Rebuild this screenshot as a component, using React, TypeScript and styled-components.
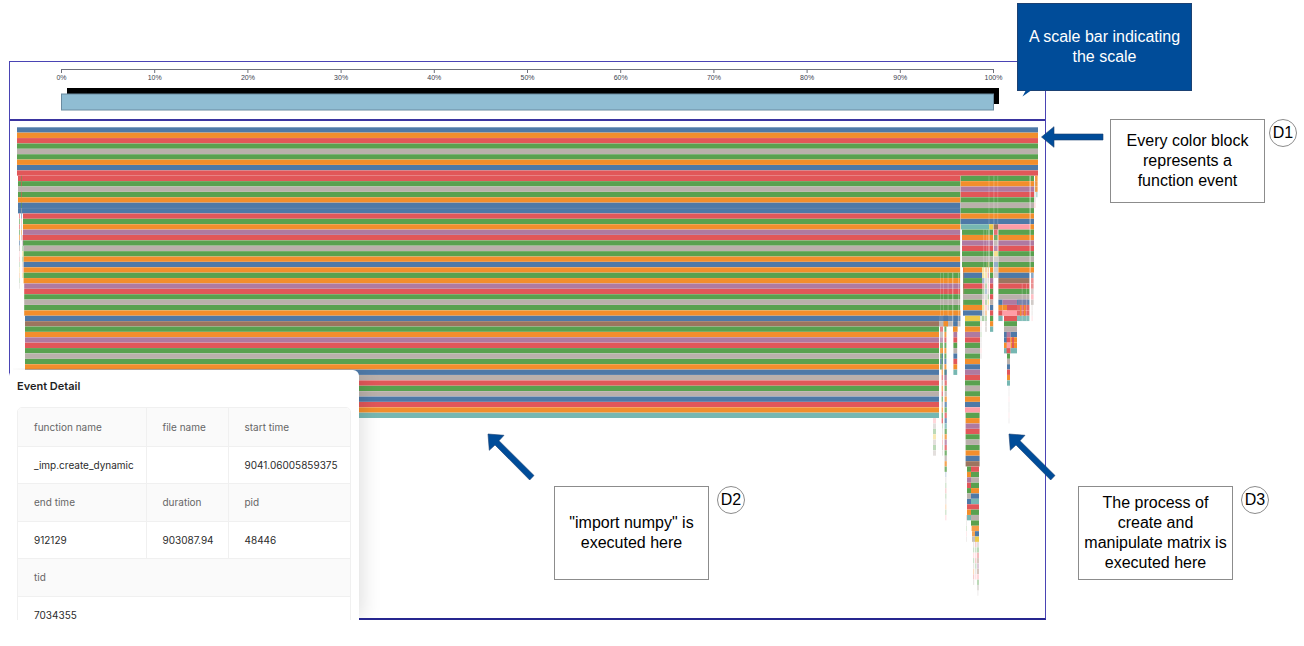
import React from "react";
import styled, { createGlobalStyle } from "styled-components";

const GlobalStyle = createGlobalStyle`
  * { box-sizing: border-box; }
  body { margin: 0; background: #fff; font-family: "Liberation Sans", Arial, sans-serif; color: #000; }
`;

const Page = styled.main`
  position: relative;
  padding: 61px 258px 26px 9px;
`;

const Profile = styled.section`
  position: relative;
  border: 1px solid #4a44b4;
  border-bottom: 2px solid #26268f;
`;

const ScaleHeader = styled.div`
  border-bottom: 2px solid #3a34a0;
  svg { display: block; width: 100%; height: auto; }
`;

const FlameArea = styled.div`
  svg { display: block; width: 100%; height: auto; }
`;

const DetailPanel = styled.aside`
  position: absolute;
  left: -1px;
  bottom: -2px;
  width: 350px;
  height: 250px;
  padding: 8px 8px 0;
  overflow: hidden;
  background: #fff;
  border-radius: 6px 6px 0 0;
  font-family: Inter, sans-serif;
`;

const PanelShade = styled.div`
  position: absolute;
  left: 3px;
  bottom: 0;
  width: 346px;
  height: 244px;
  box-shadow: 4px 0 18px rgba(0, 0, 0, 0.12);
  clip-path: inset(-6px -30px 0 0);
`;

const DetailTitle = styled.h2`
  margin: 0 0 13px;
  font-size: 11px;
  line-height: 16px;
  font-weight: 600;
  color: #1f1f1f;
`;

const DetailFrame = styled.div`
  border: 1px solid #f0f0f0;
  border-radius: 5px 5px 0 0;
  overflow: hidden;
`;

const DetailTable = styled.table`
  width: 100%;
  table-layout: fixed;
  border-collapse: collapse;
  font-size: 10px;
  line-height: 16px;
  text-align: left;
`;

const LabelCell = styled.th`
  height: 38px;
  padding: 0 0 0 16px;
  background: #fafafa;
  color: #666;
  font-weight: 400;
  border-bottom: 1px solid #f0f0f0;
  & + & { border-left: 1px solid #f0f0f0; }
`;

const ValueCell = styled.td`
  height: 37px;
  padding: 0 0 0 16px;
  color: #2b2b2b;
  border-bottom: 1px solid #f0f0f0;
  & + & { border-left: 1px solid #f0f0f0; }
`;

const NameColumn = styled.col`
  width: 128px;
`;

const FileColumn = styled.col`
  width: 82px;
`;

const Annotation = styled.div<{ $top: number; $left?: number; $right?: number; $gap?: number }>`
  position: absolute;
  top: ${(p) => p.$top}px;
  ${(p) => (p.$left !== undefined ? `left: ${p.$left}px;` : `right: ${p.$right}px;`)}
  display: flex;
  align-items: flex-start;
  gap: ${(p) => p.$gap ?? 8}px;
`;

const Note = styled.p<{ $height: number }>`
  display: flex;
  align-items: center;
  justify-content: center;
  width: 155px;
  height: ${(p) => p.$height}px;
  margin: 0;
  border: 1px solid #8c8c8c;
  background: #fff;
  font-size: 16px;
  line-height: 20px;
  text-align: center;
  white-space: pre-line;
`;

const Badge = styled.span`
  display: flex;
  align-items: center;
  justify-content: center;
  width: 28px;
  height: 28px;
  border: 1px solid #8c8c8c;
  border-radius: 50%;
  background: #fff;
  font-size: 16px;
  line-height: 20px;
`;

const Callout = styled.p`
  position: absolute;
  top: 3px;
  right: 112px;
  display: flex;
  align-items: center;
  justify-content: center;
  width: 175px;
  height: 88px;
  margin: 0;
  border: 1px solid #1b4173;
  background: #004c99;
  color: #fff;
  font-size: 16px;
  line-height: 20px;
  text-align: center;
  white-space: pre-line;
  svg { position: absolute; left: 4px; top: 86px; }
`;

const Arrow = styled.svg<{ $top: number; $left?: number; $right?: number }>`
  position: absolute;
  top: ${(p) => p.$top}px;
  ${(p) => (p.$left !== undefined ? `left: ${p.$left}px;` : `right: ${p.$right}px;`)}
  fill: #004c99;
  stroke: #1b3f70;
  stroke-width: 0.6;
`;

const COLORS: Record<string, string> = {
  b: "#4e79a7", o: "#f28e2c", r: "#e15759", t: "#76b7b2", g: "#59a14f",
  y: "#edc949", p: "#af7aa1", k: "#ff9da7", n: "#9c755f", a: "#bab0ab",
};

const ROW = 5.385;
const TOP = 127.3;

// A stack of function events: left, right, first row, one colour letter per row, opacity.
type Stack = [number, number, number, string, number?];

const STACKS: Stack[] = [
  [17, 1038, 0, "borgagobr"],
  // left edge of the import
  [18, 960.4, 9, "rgagobb"],
  [23, 960.4, 16, "rgoprg"],
  [23.6, 960.4, 22, "agobogo"],
  [24.2, 960.4, 29, "prgago"],
  [25, 939, 35, "bngoprgagobargabrot"],
  [19, 20, 16, "rgrgoba", 0.6],
  [19.2, 20, 23, "krgyoga", 0.3],
  [21, 22, 9, "grarogabkaoa", 0.55],
  [22, 23.6, 20, "rpgygaky", 0.35],
  // end of the import
  [939, 960.4, 35, "ba", 0.9],
  [943.5, 948, 35, "bo"],
  [953, 957.6, 35, "bbo"],
  [953.4, 957.2, 38, "prgabrot"],
  [940, 943, 37, "rapgogbg", 0.75],
  [941.6, 943, 41, "obgaoraorgaogr", 0.7],
  [944.4, 946.4, 37, "gorgogboga", 0.85],
  [944.6, 946.8, 45, "bprgaobgrbtgoprgaog", 0.8],
  [945.2, 946.4, 64, "bagrgaogk", 0.3],
  [933, 936, 54, "kagyaga", 0.4],
  [942, 943, 54, "rgaorga", 0.3],
  // matrix operations
  [960.6, 1034, 9, "goprgagob"],
  [961, 989.2, 18, "t"],
  [989.2, 993.2, 18, "y"],
  [993.6, 998, 18, "n"],
  [998, 1030, 18, "k"],
  [1030, 1034, 18, "o"],
  [962, 993.2, 19, "goprg"],
  [962, 990.4, 24, "ag"],
  [963, 982, 26, "obgrgagob"],
  [965, 980, 35, "ygoprgagobprgagobk"],
  [965.6, 979.6, 53, "goprgagobn"],
  [967, 971, 63, "goprgabrot"],
  [971, 979, 63, "rg"],
  [971, 979, 65, "agobtrgag"],
  [971.6, 979, 74, "o", 0.85],
  [972, 975, 75, "oa", 0.8],
  [975, 979, 75, "by"],
  [973, 974.2, 77, "agkgaora", 0.3],
  [975.2, 976.4, 77, "rgkrgak", 0.35],
  [977, 979, 77, "agrnpnkga", 0.4],
  [977.4, 978.4, 86, "a", 0.25],
  [966, 966.8, 72, "ragka", 0.25],
  [980.5, 981.5, 34, "agkagaaka", 0.35],
  [963, 964.2, 26, "ropgkaa", 0.35],
  [982, 984.4, 26, "yybrgakyag", 0.5],
  [985, 987, 26, "oyagbagkogaa", 0.4],
  [987.6, 989, 25, "yorakagya", 0.45],
  [990, 993.2, 24, "agogprgrabrgot"],
  [994, 997.6, 19, "rgap", 0.85],
  [994, 998, 23, "yabaa", 0.6],
  [998.4, 1034, 19, "goprgag"],
  [998.4, 1034, 26, "o"],
  [998.4, 1029.4, 27, "bnrga"],
  [1031, 1033.6, 27, "brraka", 0.65],
  [1031.6, 1032.6, 33, "aak", 0.3],
  [998.4, 1002.6, 32, "bort"],
  [1002.6, 1017, 32, "pok"],
  [1007, 1017, 33, "r"],
  [1017, 1029.4, 32, "brrt", 0.9],
  [1020, 1021.4, 33, "oo"],
  [1024, 1025.4, 33, "oo"],
  [1018, 1028, 32, "p", 0.35],
  [1004, 1017, 35, "rga"],
  // one batch of element-wise calls
  [1004, 1007, 38, "bbot"],
  [1006.6, 1010.6, 38, "prkr"],
  [1010.6, 1017, 38, "boot"],
  [1012, 1014, 39, "rr"],
  [1007, 1010, 42, "gabrot"],
  [1008.6, 1009.4, 48, "aakaaka", 0.25],
  // short calls on the right edge
  [1035, 1037.6, 9, "ooo", 0.9],
  [1036, 1037.6, 12, "t", 0.5],
  [1034.2, 1035.6, 10, "aaaak", 0.4],
];

// Hairline gaps between neighbouring calls: x, width, first row, last row, opacity.
const GAPS: [number, number, number, number, number][] = [
  [960.2, 1.2, 19, 33, 0.85],
  [988.6, 0.8, 9, 17, 0.25],
  [993.4, 1, 9, 17, 0.25],
  [997.4, 0.8, 9, 17, 0.25],
  [1029.6, 1, 9, 26, 0.65],
  [983.4, 0.8, 19, 25, 0.3],
  [986.4, 0.8, 19, 25, 0.3],
  [988.4, 1.2, 19, 25, 0.55],
  [940, 1, 27, 34, 0.2],
  [943, 1, 27, 34, 0.2],
  [947.6, 1, 27, 34, 0.25],
  [952, 1.4, 27, 36, 0.35],
  [958, 1.2, 27, 36, 0.3],
  [1021.8, 0.7, 29, 35, 0.35],
  [1026, 0.7, 29, 35, 0.35],
];

const TICKS = Array.from({ length: 11 }, (_, i) => i * 10);

function Scale() {
  return (
    <svg viewBox="10 62 1035 57" role="img" aria-label="Scale bar">
      <rect x="67" y="88" width="932" height="16" fill="#000" />
      <rect x="61.5" y="94" width="932" height="16" fill="#90bdd3" stroke="#6b8ba0" strokeWidth="1" />
      <path d="M61.5 69.5H993.5" stroke="#6e7079" fill="none" />
      {TICKS.map((t) => (
        <g key={t}>
          <path d={`M${61.5 + t * 9.32} 69v4`} stroke="#6e7079" />
          <text x={61.5 + t * 9.32} y="79.5" fontSize="7" textAnchor="middle" fill="#3c4250">{t}%</text>
        </g>
      ))}
    </svg>
  );
}

function Flame() {
  return (
    <svg viewBox="10 121 1035 497" role="img" aria-label="Function events">
      {STACKS.map(([left, right, first, colors, opacity], s) => (
        <g key={s} opacity={opacity ?? 1}>
          {colors.split("").map((c, i) => (
            <rect key={i} x={left} width={right - left} y={TOP + (first + i) * ROW} height={ROW - 0.1} fill={COLORS[c]} />
          ))}
        </g>
      ))}
      {GAPS.map(([x, w, a, b, opacity], i) => (
        <rect key={i} x={x} width={w} y={TOP + a * ROW} height={(b - a + 1) * ROW} fill="#fff" opacity={opacity} />
      ))}
    </svg>
  );
}

function EventDetail() {
  return (
    <DetailPanel>
      <DetailTitle>Event Detail</DetailTitle>
      <DetailFrame>
        <DetailTable>
          <colgroup>
            <NameColumn />
            <FileColumn />
            <col />
          </colgroup>
          <tbody>
            <tr>
              <LabelCell>function name</LabelCell>
              <LabelCell>file name</LabelCell>
              <LabelCell>start time</LabelCell>
            </tr>
            <tr>
              <ValueCell>_imp.create_dynamic</ValueCell>
              <ValueCell />
              <ValueCell>9041.06005859375</ValueCell>
            </tr>
            <tr>
              <LabelCell>end time</LabelCell>
              <LabelCell>duration</LabelCell>
              <LabelCell>pid</LabelCell>
            </tr>
            <tr>
              <ValueCell>912129</ValueCell>
              <ValueCell>903087.94</ValueCell>
              <ValueCell>48446</ValueCell>
            </tr>
            <tr>
              <LabelCell colSpan={3}>tid</LabelCell>
            </tr>
            <tr>
              <ValueCell colSpan={3}>7034355</ValueCell>
            </tr>
          </tbody>
        </DetailTable>
      </DetailFrame>
    </DetailPanel>
  );
}

const DIAGONAL = "1,1 17,2.3 12,7.7 47,42.5 42.7,47 8,12 2.3,17.3";

export default function App() {
  return (
    <>
      <GlobalStyle />
      <Page>
        <Profile>
          <ScaleHeader><Scale /></ScaleHeader>
          <FlameArea><Flame /></FlameArea>
          <PanelShade />
          <EventDetail />
        </Profile>

        <Callout>
          {"A scale bar indicating\nthe scale"}
          <svg width="14" height="8" viewBox="0 0 14 8" aria-hidden="true">
            <path d="M4 0L0.5 6.5L9 0.5Z" fill="#004c99" />
          </svg>
        </Callout>

        <Arrow $top={126} $right={200} width="64" height="22" viewBox="0 0 64 22" aria-hidden="true">
          <polygon points="1.5,11 14,0.7 14,8 63,8 63,14 14,14 14,21.3" />
        </Arrow>
        <Annotation $top={119} $right={7} $gap={4}>
          <Note $height={84}>{"Every color block\nrepresents a\nfunction event"}</Note>
          <Badge>D1</Badge>
        </Annotation>

        <Arrow $top={433} $left={487} width="48" height="48" viewBox="0 0 48 48" aria-hidden="true">
          <polygon points={DIAGONAL} />
        </Arrow>
        <Annotation $top={486} $left={554}>
          <Note $height={94}>{"\"import numpy\" is\nexecuted here"}</Note>
          <Badge>D2</Badge>
        </Annotation>

        <Arrow $top={433} $right={248} width="48" height="48" viewBox="0 0 48 48" aria-hidden="true">
          <polygon points={DIAGONAL} />
        </Arrow>
        <Annotation $top={486} $right={35}>
          <Note $height={94}>{"The process of\ncreate and\nmanipulate matrix is\nexecuted here"}</Note>
          <Badge>D3</Badge>
        </Annotation>
      </Page>
    </>
  );
}
